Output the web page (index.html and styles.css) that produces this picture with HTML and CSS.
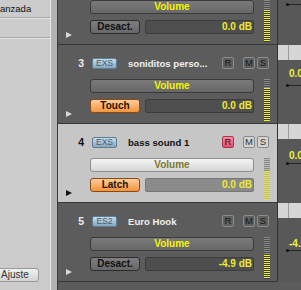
FILE: index.html
```html
<!DOCTYPE html>
<html>
<head>
<meta charset="utf-8">
<link rel="stylesheet" href="styles.css">
</head>
<body>
<div class="app">
  <aside class="sidebar">
    <div class="side-row first">anzada</div>
    <div class="side-row"></div>
    <div class="side-spacer"></div>
    <div class="side-foot"><button class="ajuste">Ajuste</button></div>
  </aside>
  <div class="edge"></div>
  <main class="tracks">
    <section class="track partial">
      <div class="head">
        <div class="vol">Volume</div>
        <div class="mode"><div class="mbtn">Desact.</div><div class="db">0.0 dB</div></div>
        <div class="tri"></div>
        <div class="meter"><div class="dim" style="height:10px"></div><div class="lit"></div></div>
      </div>
      <div class="divider"></div>
      <div class="lane">
        <div class="strip"></div>
        <div class="autoline" style="top:38px"></div>
      </div>
    </section>

    <section class="track">
      <div class="head">
        <div class="hrow">
          <span class="num">3</span><span class="badge">EXS</span><span class="name">soniditos perso...</span>
          <span class="rms"><span class="key r">R</span><span class="key m">M</span><span class="key">S</span></span>
        </div>
        <div class="vol">Volume</div>
        <div class="mode"><div class="mbtn orange">Touch</div><div class="db">0.0 dB</div></div>
        <div class="tri"></div>
        <div class="meter"><div class="dim" style="height:9px"></div><div class="lit"></div></div>
      </div>
      <div class="divider"></div>
      <div class="lane">
        <div class="strip"></div>
        <div class="autolabel" style="top:23px">0.0 dB</div>
        <div class="autoline" style="top:40px"></div>
      </div>
    </section>

    <section class="track selected">
      <div class="head">
        <div class="hrow">
          <span class="num">4</span><span class="badge">EXS</span><span class="name">bass sound 1</span>
          <span class="rms"><span class="key r on">R</span><span class="key m">M</span><span class="key">S</span></span>
        </div>
        <div class="vol">Volume</div>
        <div class="mode"><div class="mbtn orange">Latch</div><div class="db">0.0 dB</div></div>
        <div class="tri"></div>
        <div class="meter"><div class="dim" style="height:13px"></div><div class="lit"></div></div>
      </div>
      <div class="divider"></div>
      <div class="lane">
        <div class="strip"></div>
        <div class="autolabel" style="top:26px">0.0 dB</div>
        <div class="autoline" style="top:39px"></div>
      </div>
    </section>

    <section class="track">
      <div class="head">
        <div class="hrow">
          <span class="num">5</span><span class="badge">ES2</span><span class="name">Euro Hook</span>
          <span class="rms"><span class="key r">R</span><span class="key m">M</span><span class="key">S</span></span>
        </div>
        <div class="vol">Volume</div>
        <div class="mode"><div class="mbtn">Desact.</div><div class="db">-4.9 dB</div></div>
        <div class="tri"></div>
        <div class="meter"><div class="dim" style="height:18px"></div><div class="lit"></div></div>
      </div>
      <div class="divider"></div>
      <div class="lane">
        <div class="strip"></div>
        <div class="autolabel" style="top:35px">-4.9 dB</div>
        <div class="autoline" style="top:47px"></div>
      </div>
    </section>
  </main>
</div>
</body>
</html>
```

FILE: styles.css
```css
* { box-sizing: border-box; margin: 0; padding: 0; }
html, body { width: 301px; height: 290px; overflow: hidden; }
body { font-family: "Liberation Sans", Arial, sans-serif; background: #5b5b5b; }

.app { display: flex; height: 290px; }

.sidebar {
  width: 51px; flex: none; background: #cbcbcb;
  border-right: 1px solid #e8e8e8;
  display: flex; flex-direction: column;
}
.side-row { height: 20px; border-bottom: 1px solid #a9a9a9; box-shadow: 0 1px 0 #e2e2e2; }
.side-row.first { height: 18px; font-size: 9.5px; line-height: 17px; color: #111; white-space: nowrap; overflow: hidden; }
.side-spacer { flex: 1; }
.side-foot { padding-bottom: 8px; }
.ajuste {
  display: block; margin-left: -6px; width: 45px; height: 14px;
  padding-left: 6px; text-align: left;
  font-family: "Liberation Sans", Arial, sans-serif; font-size: 10px; line-height: 12px; color: #333;
  background: linear-gradient(#f2f2f2, #d2d2d2);
  border: 1px solid #999; border-radius: 3px;
}

.edge { width: 7px; flex: none; background: #b3b3b3; border-right: 1px solid #3a3a3a; }

.tracks { flex: 1; display: flex; flex-direction: column; overflow: hidden; }

.track { display: grid; grid-template-columns: 219px 1px 1fr; height: 79px; flex: none; }
.track.partial { margin-top: -34px; }

.head {
  display: grid;
  grid-template-columns: 32px 164px 23px;
  grid-template-rows: 12px 12px 10px 14px 6px 14px 10px;
  background: #5c5c5c;
  border-bottom: 1px solid #383838;
}
.selected .head { background: #c6c6c6; }

.hrow { grid-column: 1 / 4; grid-row: 2; display: flex; align-items: center; padding-right: 8px; }
.num { width: 26px; flex: none; text-align: right; font-weight: bold; font-size: 10.5px; color: #ececec; }
.selected .num { color: #111; }
.badge {
  margin-left: 8px; width: 25px; height: 11px; flex: none;
  border-radius: 2px; border: 1px solid #5d7d94;
  background: linear-gradient(#c8dcea, #86a5bb);
  color: #3f5d76; font-size: 8.5px; line-height: 9px; text-align: center;
}
.name {
  margin-left: 11px; flex: 1; white-space: nowrap; overflow: hidden;
  font-weight: bold; font-size: 9.6px; color: #f0f0f0;
}
.selected .name { color: #111; }
.rms { display: flex; flex: none; }
.key {
  width: 12px; height: 12px; border: 1px solid #8c8c8c; border-radius: 2px;
  background: #5f5f5f; color: #151515; font-size: 9.5px; line-height: 10px; text-align: center;
}
.key.r { margin-right: 9px; }
.key.m { margin-right: 2px; }
.selected .key { background: #d4d4d4; border-color: #8a8a8a; color: #333; }
.selected .key.on { background: linear-gradient(#f78aa0, #e44f6c); border-color: #a8344c; color: #4a0010; }

.vol {
  grid-column: 2; grid-row: 4;
  border: 1px solid #3a3a3a; border-radius: 3px;
  background: linear-gradient(#7a7a7a, #676767);
  color: #f4f400; font-weight: bold; font-size: 10px; line-height: 12px; text-align: center;
}
.selected .vol { background: linear-gradient(#f4f4f4, #d6d6d6); border-color: #8e8e8e; color: #7a782c; }

.mode { grid-column: 2; grid-row: 6; display: flex; gap: 5px; }
.mbtn {
  width: 50px; flex: none; border: 1px solid #2c2c2c; border-radius: 3px;
  background: linear-gradient(#7e7e7e, #686868);
  color: #111; font-weight: bold; font-size: 10px; line-height: 12px; text-align: center;
}
.mbtn.orange { background: linear-gradient(#fecd9c, #f2953c); border-color: #8a4a14; color: #2a1400; }
.db {
  flex: 1; background: #4e4e4e; border: 1px solid #3c3c3c; border-radius: 2px;
  color: #ecec2e; font-weight: bold; font-size: 10px; line-height: 12px;
  text-align: right; padding-right: 1px;
}
.selected .db { background: #8b8b8b; border-color: #777; }

.tri {
  grid-column: 1; grid-row: 6 / 8; align-self: end;
  margin: 0 0 6px 8px; width: 0; height: 0;
  border-left: 6px solid #d8d8d8;
  border-top: 3.5px solid transparent; border-bottom: 3.5px solid transparent;
}
.selected .tri { border-left-color: #111; }

.meter { grid-column: 3; grid-row: 4 / 8; margin-left: 10px; width: 6px; height: 42px; display: flex; flex-direction: column; }
.meter .dim { flex: none; background: repeating-linear-gradient(#8a8a8a 0 1px, #4c4c4c 1px 2px); }
.meter .lit { flex: 1; background: repeating-linear-gradient(#ecec3c 0 1px, #3e3e3e 1px 2px); }
.selected .meter .dim { background: repeating-linear-gradient(#8a8a8a 0 1px, #b8b8b8 1px 2px); }
.selected .meter .lit { background: repeating-linear-gradient(#e4e43a 0 1px, #b8b8a8 1px 2px); }

.divider { background: #333; }

.lane { position: relative; overflow: hidden; background: #585858; }
.strip {
  height: 15px;
  background: linear-gradient(to right, transparent 10px, #9a9a9a 10px 11px, transparent 11px), #d6d6d6;
}
.autolabel {
  position: absolute; left: 11px; white-space: nowrap;
  color: #f0f03c; font-weight: bold; font-size: 10px; line-height: 11px;
}
.autoline { position: absolute; left: 8px; right: 0; height: 1px; background: #262626; }
.autoline::before {
  content: ""; position: absolute; left: 0; top: -1px; width: 3px; height: 3px;
  border-radius: 50%; background: #111;
}
```
